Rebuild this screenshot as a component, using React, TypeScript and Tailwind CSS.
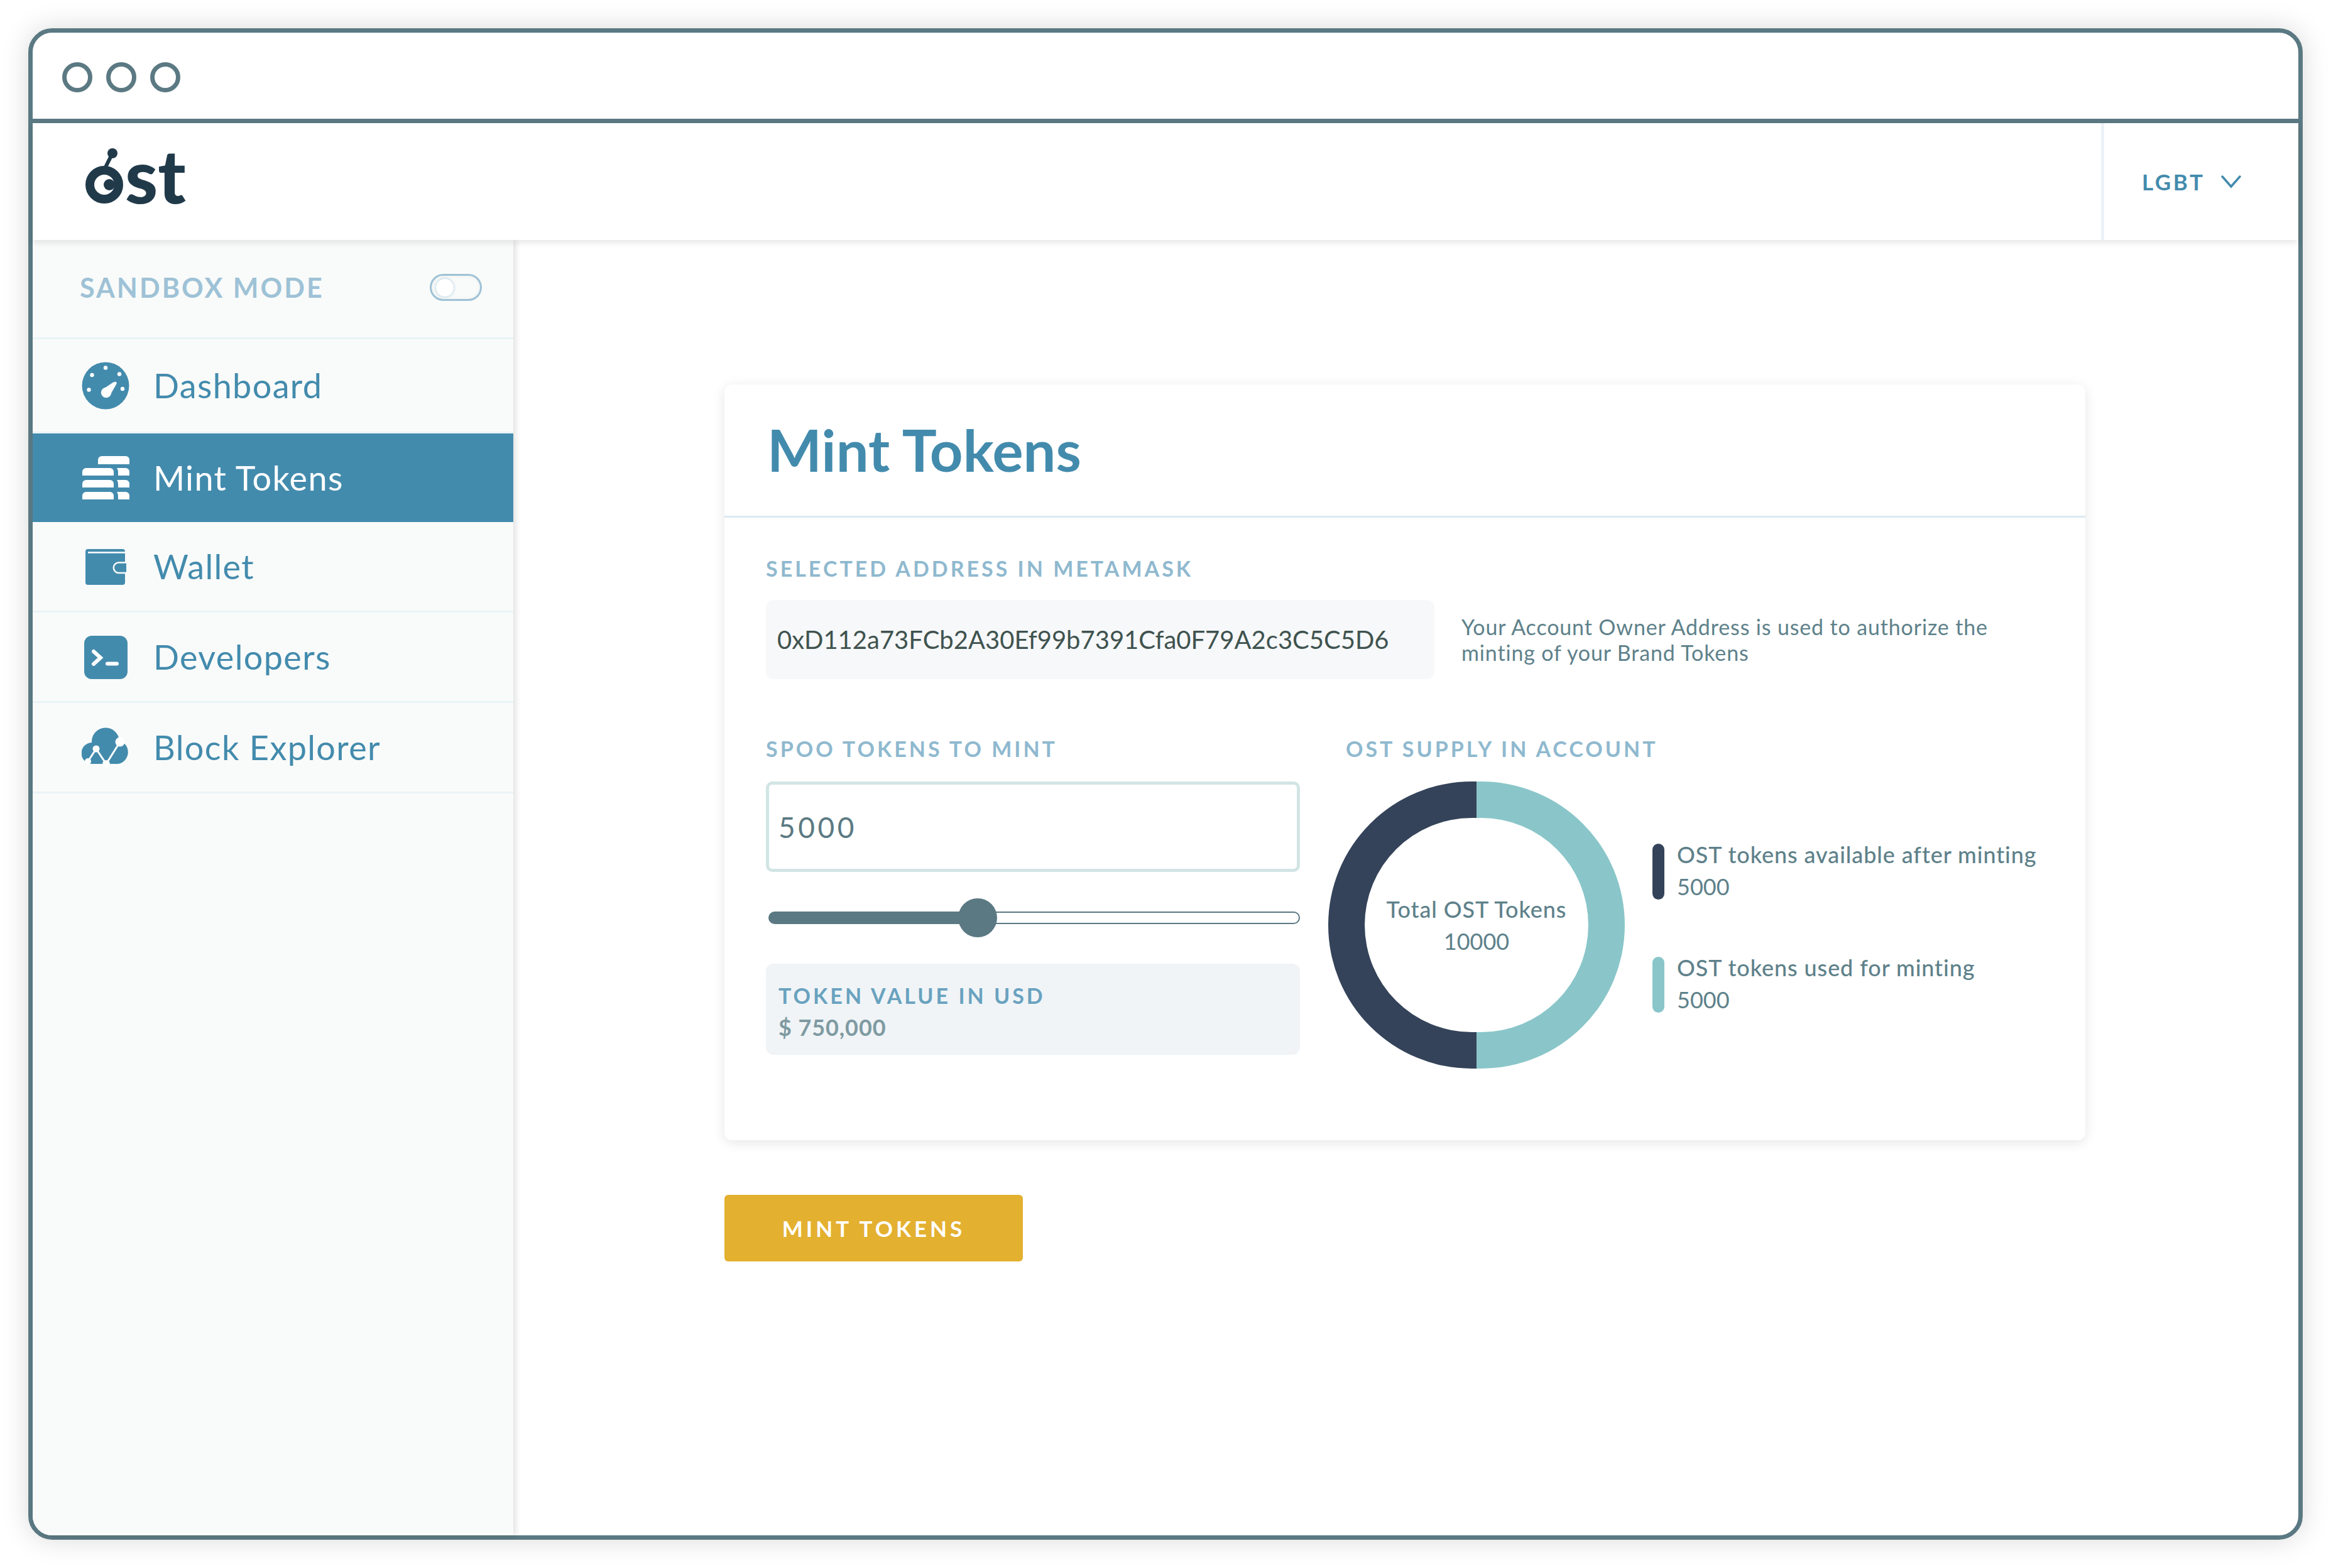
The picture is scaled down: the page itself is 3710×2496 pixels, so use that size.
import { useState } from "react";
import type { ReactNode } from "react";

const TOTAL = 10000;
const SLIDER_MAX = 13000;

function Logo() {
  return (
    <div className="flex items-baseline text-[#213a4a]" role="img" aria-label="ost">
      <svg className="h-[90px] w-[64px]" viewBox="0 0 64 90" aria-hidden="true">
        <path d="M31 36 44 10" stroke="currentColor" strokeWidth="6" />
        <circle cx="44" cy="10" r="8" fill="currentColor" />
        <circle cx="31" cy="60" r="23" fill="none" stroke="currentColor" strokeWidth="14" />
        <circle cx="39" cy="60" r="9" fill="currentColor" />
      </svg>
      <span className="text-[118px] leading-[90px] font-black">st</span>
    </div>
  );
}

function GaugeIcon() {
  return (
    <svg className="h-[76px] w-[76px]" viewBox="0 0 76 76" aria-hidden="true">
      <circle cx="38" cy="38" r="37.5" fill="currentColor" />
      <g fill="#fff">
        <circle cx="38" cy="9.5" r="3.2" />
        <circle cx="16.5" cy="21" r="3.2" />
        <circle cx="60" cy="19.5" r="3.2" />
        <circle cx="11.5" cy="44.5" r="3.2" />
        <circle cx="65" cy="43" r="3.2" />
        <circle cx="39" cy="49" r="8.2" />
      </g>
      <path d="M40 47 53.500 34" stroke="#fff" strokeWidth="4.5" strokeLinecap="round" />
      <path d="M33 44 51 32l4 4-11 19Z" fill="#fff" />
    </svg>
  );
}

function StackIcon() {
  return (
    <svg className="h-[76px] w-[76px]" viewBox="0 0 76 76" fill="currentColor" aria-hidden="true">
      <path d="M26 16V9a6 6 0 0 1 6-6h38a6 6 0 0 1 6 6v7Z" />
      {[22, 41, 60].map((y) => (
        <g key={y}>
          <path d={`M1 ${y + 12}v-6a6 6 0 0 1 6-6h38a6 6 0 0 1 6 6v6Z`} />
          <path d={`M56 ${y}h14a6 6 0 0 1 6 6v6H58v-6a12 12 0 0 0-2-6Z`} />
        </g>
      ))}
    </svg>
  );
}

function WalletIcon() {
  return (
    <svg className="h-[76px] w-[76px]" viewBox="0 0 76 76" aria-hidden="true">
      <rect x="6" y="10" width="63" height="57" rx="4" fill="currentColor" />
      <path d="M10 15.5h59" stroke="#fff" strokeWidth="2.5" />
      <path d="M71 31.500H59a8 8 0 0 0 0 16.500h12" fill="currentColor" stroke="#f9fbfa" strokeWidth="2.5" />
    </svg>
  );
}

function TerminalIcon() {
  return (
    <svg className="h-[76px] w-[76px]" viewBox="0 0 76 76" aria-hidden="true">
      <rect x="4" y="4" width="69" height="69" rx="12" fill="currentColor" />
      <path d="m19 29 11 10-11 10M41 48.500h15" fill="none" stroke="#fff" strokeWidth="6" strokeLinecap="round" />
    </svg>
  );
}

function CloudIcon() {
  return (
    <svg className="h-[76px] w-[76px]" viewBox="0 0 76 76" aria-hidden="true">
      <path d="M17 64a17 17 0 0 1-1-34A22 22 0 0 1 60 27A19 19 0 0 1 58 64Z" fill="currentColor" />
      <path d="M10 60 23 40l16 24 22-35" fill="none" stroke="#fff" strokeWidth="3" />
      <g fill="#fff">
        <circle cx="10" cy="60" r="5" />
        <circle cx="23" cy="40" r="5.5" />
        <circle cx="39" cy="64" r="6" />
        <circle cx="61" cy="29" r="7.5" />
      </g>
    </svg>
  );
}

const items: { label: string; icon: ReactNode; active?: boolean }[] = [
  { label: "Dashboard", icon: <GaugeIcon /> },
  { label: "Mint Tokens", icon: <StackIcon />, active: true },
  { label: "Wallet", icon: <WalletIcon /> },
  { label: "Developers", icon: <TerminalIcon /> },
  { label: "Block Explorer", icon: <CloudIcon /> },
];

function Sidebar() {
  return (
    <aside className="z-10 w-[765px] shrink-0 rounded-bl-[31px] bg-[#f9fbfa] shadow-[4px_0_10px_rgba(0,0,0,0.12)]">
      <div className="flex h-[158px] items-center justify-between border-b-[3px] border-[#e9f4f6] pr-[50px] pb-[4px] pl-[75px]">
        <label htmlFor="sandbox" className="text-[43px] leading-none font-bold tracking-[3px] text-[#9ec2d6]">
          SANDBOX MODE
        </label>
        <input
          id="sandbox"
          type="checkbox"
          className="flex h-[43px] w-[83px] appearance-none items-center rounded-full border-[3px] border-[#9ec2d6] px-[7px] shadow-[inset_0_0_6px_rgba(0,0,0,0.06)] before:h-[28px] before:w-[28px] before:rounded-full before:bg-white before:shadow-[0_0_4px_#9ec2d6] checked:justify-end"
        />
      </div>
      <nav>
        {items.map((item) => (
          <a
            key={item.label}
            href="#"
            aria-current={item.active ? "page" : undefined}
            className={
              item.active
                ? "flex h-[141px] items-center gap-[38px] bg-[#438bad] pl-[78px] text-[54px] tracking-wide text-white"
                : "flex h-[144px] items-center gap-[38px] border-b-[3px] border-[#e9f4f6] pl-[78px] text-[54px] tracking-wide text-[#438bad] first:h-[150px]"
            }
          >
            {item.icon}
            {item.label}
          </a>
        ))}
      </nav>
    </aside>
  );
}

function Donut() {
  return (
    <div className="relative h-[457px] w-[472px]">
      <svg className="h-full w-full" viewBox="0 0 472 457" aria-hidden="true">
        <path d="M236 0h-7.500a228.500 228.500 0 0 0 0 457h7.500v-58h-7.500a170.500 170.500 0 0 1 0-341h7.500Z" fill="#344359" />
        <path d="M236 0h7.500a228.500 228.500 0 0 1 0 457h-7.500v-58h7.500a170.500 170.500 0 0 0 0-341h-7.500Z" fill="#8ac6c9" />
      </svg>
      <div className="absolute inset-0 flex flex-col items-center justify-center text-[36px] leading-[51px] text-[#5e818a]">
        <span className="font-medium tracking-wide">Total OST Tokens</span>
        <span>{TOTAL}</span>
      </div>
    </div>
  );
}

function Legend({ swatch, label, value }: { swatch: string; label: string; value: number }) {
  return (
    <div className="flex gap-[20px] text-[36px] leading-[51px] text-[#5e818a]">
      <span className={swatch} />
      <div className="-mt-[8px]">
        <div className="font-medium tracking-wide">{label}</div>
        <div>{value}</div>
      </div>
    </div>
  );
}

function MintCard({ amount, onAmount }: { amount: number; onAmount: (n: number) => void }) {
  const fill = (amount / SLIDER_MAX) * 100;
  return (
    <section className="rounded-[12px] bg-white pb-[114px] shadow-[0_4px_20px_rgba(0,0,0,0.1)]">
      <h1 className="border-b-[3px] border-[#dce9f1] px-[68px] pt-[50px] pb-[51px] text-[92px] leading-[108px] font-bold text-[#438bad]">
        Mint Tokens
      </h1>
      <div className="px-[66px] pt-[61px]">
        <label htmlFor="address" className="block text-[34px] leading-[40px] font-bold tracking-[4px] text-[#8fb9cf]">
          SELECTED ADDRESS IN METAMASK
        </label>
        <div className="mt-[30px] flex items-center gap-[43px]">
          <input
            id="address"
            readOnly
            value="0xD112a73FCb2A30Ef99b7391Cfa0F79A2c3C5C5D6"
            className="h-[126px] w-[1064px] rounded-[12px] bg-[#f7f8fa] px-[18px] text-[40px] text-[#3f534f]"
          />
          <p className="max-w-[900px] text-[34px] leading-[41px] tracking-wide text-[#5e818a]">
            Your Account Owner Address is used to authorize the minting of your Brand Tokens
          </p>
        </div>
        <div className="mt-[91px] flex gap-[45px]">
          <div className="w-[850px]">
            <label htmlFor="amount" className="block text-[34px] leading-[40px] font-bold tracking-[4px] text-[#8fb9cf]">
              SPOO TOKENS TO MINT
            </label>
            <input
              id="amount"
              inputMode="numeric"
              value={amount}
              onChange={(e) => onAmount(Math.min(SLIDER_MAX, Number(e.target.value) || 0))}
              className="mt-[32px] block h-[144px] w-full rounded-[10px] border-[5px] border-[#d2e5e5] bg-white px-[15px] text-[46px] tracking-widest text-[#5b7a83]"
            />
            <input
              type="range"
              aria-label="SPOO tokens to mint"
              min={0}
              max={SLIDER_MAX}
              value={amount}
              onChange={(e) => onAmount(Number(e.target.value))}
              style={{ backgroundImage: `linear-gradient(to right, #5b7983 ${fill}%, #fff ${fill}%)` }}
              className="mt-[63px] ml-[4px] block h-[20px] w-[846px] appearance-none rounded-full border-[2px] border-[#5b7983] [&::-webkit-slider-thumb]:h-[62px] [&::-webkit-slider-thumb]:w-[62px] [&::-webkit-slider-thumb]:appearance-none [&::-webkit-slider-thumb]:rounded-full [&::-webkit-slider-thumb]:bg-[#5b7983]"
            />
            <div className="mt-[63px] h-[145px] rounded-[12px] bg-[#f0f4f7] px-[20px] pt-[25px]">
              <div className="text-[34px] leading-[51px] font-bold tracking-[4px] text-[#69a2bf]">TOKEN VALUE IN USD</div>
              <div className="text-[36px] leading-[51px] font-bold tracking-wide text-[#7f9aa1]">$ {(amount * 150).toLocaleString("en-US")}</div>
            </div>
          </div>
          <div>
            <h2 className="ml-[28px] text-[34px] leading-[40px] font-bold tracking-[4px] text-[#8fb9cf]">OST SUPPLY IN ACCOUNT</h2>
            <div className="mt-[32px] flex gap-[44px]">
              <Donut />
              <div className="flex flex-col gap-[86px] pt-[99px]">
                <Legend swatch="h-[89px] w-[19px] rounded-full bg-[#344359]" label="OST tokens available after minting" value={Math.max(0, TOTAL - amount)} />
                <Legend swatch="h-[89px] w-[19px] rounded-full bg-[#8ac6c9]" label="OST tokens used for minting" value={amount} />
              </div>
            </div>
          </div>
        </div>
      </div>
    </section>
  );
}

export default function App() {
  const [amount, setAmount] = useState(5000);
  return (
    <div className="flex min-h-screen bg-white p-[45px] font-['Lato',sans-serif]">
      <div className="flex flex-1 flex-col rounded-[38px] border-[7px] border-[#5b7983] bg-white shadow-[0_0_44px_rgba(0,0,0,0.15)]">
        <div className="flex h-[144px] gap-[22px] border-b-[7px] border-[#5b7983] pt-[47px] pl-[47px]">
          <span className="h-[48px] w-[48px] rounded-full border-[7px] border-[#5b7983]" />
          <span className="h-[48px] w-[48px] rounded-full border-[7px] border-[#5b7983]" />
          <span className="h-[48px] w-[48px] rounded-full border-[7px] border-[#5b7983]" />
        </div>
        <header className="z-20 flex h-[186px] items-stretch justify-between bg-white pl-[83px] shadow-[0_4px_10px_rgba(0,0,0,0.1)]">
          <a href="#" className="flex items-start pt-[38px]">
            <Logo />
          </a>
          <div className="relative flex w-[314px] items-center border-l-[5px] border-[#edf2f6]">
            <select
              aria-label="Token"
              className="h-full w-full appearance-none bg-transparent pl-[60px] text-[35px] font-bold tracking-widest text-[#438bad]"
            >
              <option>LGBT</option>
            </select>
            <svg className="pointer-events-none absolute right-[90px] h-[24px] w-[34px]" viewBox="0 0 34 24" aria-hidden="true">
              <path d="M3 4l14 16L31 4" fill="none" stroke="#438bad" strokeWidth="3.5" strokeLinecap="round" />
            </svg>
          </div>
        </header>
        <div className="flex flex-1">
          <Sidebar />
          <main className="flex-1 rounded-br-[31px] pt-[230px] pr-[339px] pl-[336px]">
            <MintCard amount={amount} onAmount={setAmount} />
            <button className="mt-[87px] h-[106px] w-[475px] rounded-[6px] bg-[#e4b030] text-[35px] font-bold tracking-[5px] text-white">
              MINT TOKENS
            </button>
          </main>
        </div>
      </div>
    </div>
  );
}
